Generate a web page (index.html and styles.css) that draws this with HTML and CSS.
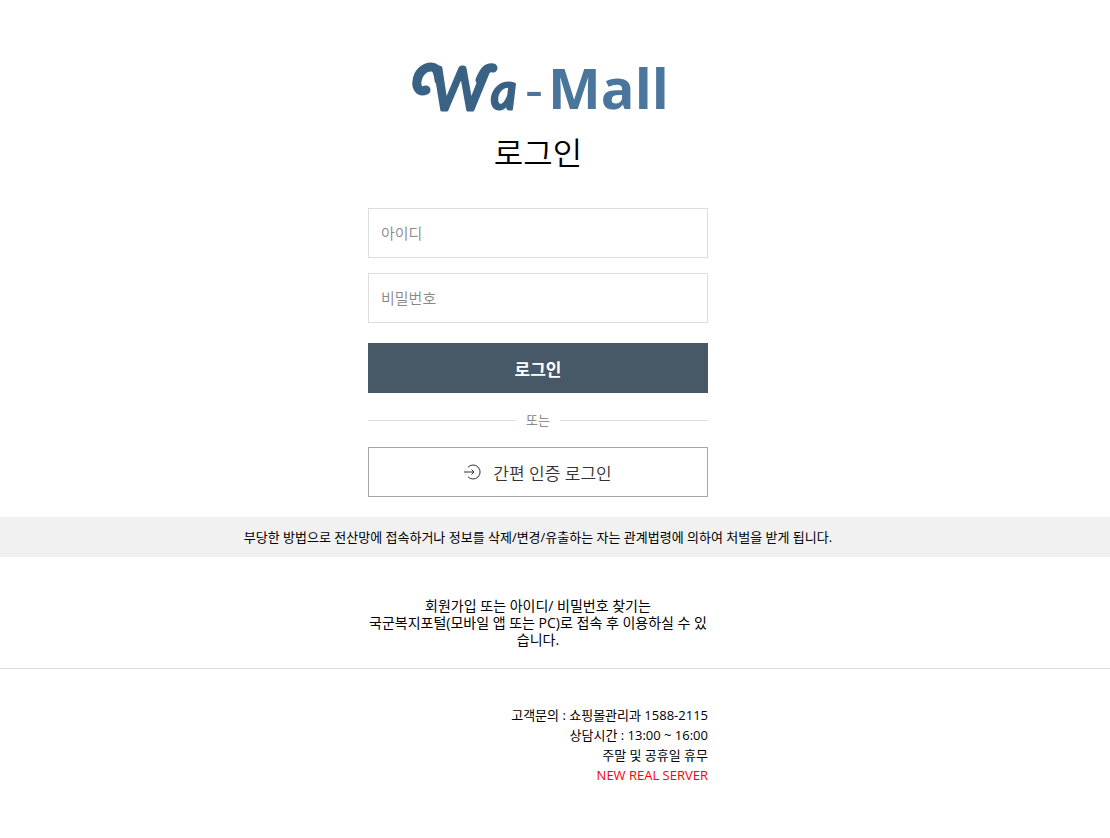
FILE: index.html
```html
<!DOCTYPE html>
<html lang="ko">
  <head>
    <meta charset="utf-8">
    <title>Wa-Mall 로그인</title>
    <meta name="viewport" content="width=device-width, initial-scale=1.0">
    <link rel="stylesheet" href="styles.css">
  </head>
  <body>
    <main class="login">
      <svg class="logo" viewBox="-4 -20 264 90" role="img" aria-label="Wa-Mall">
        <path class="logo-curl" d="M16 30C9 33 6 27 7 21C8 12 15 7 21 7C27 7 28 13 29 20"/>
        <path class="logo-curl" d="M70 20C74 11 77 7 83 8"/>
        <text class="logo-script" x="21" y="50" font-size="60">W</text>
        <text class="logo-script" x="81" y="49" font-size="50">a</text>
        <text class="logo-dash" x="115" y="49">-</text>
        <text class="logo-mall" x="138" y="49">Mall</text>
      </svg>
      <h1>로그인</h1>
      <form class="login-form">
        <input type="text" id="userId" placeholder="아이디" aria-label="아이디">
        <input type="password" id="userPw" placeholder="비밀번호" aria-label="비밀번호">
        <button type="submit" class="login-button">로그인</button>
        <div class="or">또는</div>
        <button type="button" class="simple-button">
          <svg class="enter-icon" viewBox="0 0 18 18" aria-hidden="true">
            <path d="M4 4.2A7 7 0 1 1 4 13.8M0 9H10M7.5 6.5L10 9L7.5 11.5"/>
          </svg>
          간편 인증 로그인
        </button>
      </form>
    </main>

    <p class="notice">부당한 방법으로 전산망에 접속하거나 정보를 삭제/변경/유출하는 자는 관계법령에 의하여 처벌을 받게 됩니다.</p>

    <div class="guide">
      <p>회원가입 또는 아이디/ 비밀번호 찾기는<br>국군복지포털(모바일 앱 또는 PC)로 접속 후 이용하실 수 있<br>습니다.</p>
    </div>

    <footer>
      <div class="contact">
        <p>고객문의 : 쇼핑몰관리과 1588-2115</p>
        <p>상담시간 : 13:00 ~ 16:00</p>
        <p>주말 및 공휴일 휴무</p>
        <p class="server">NEW REAL SERVER</p>
      </div>
    </footer>
  </body>
</html>
```

FILE: styles.css
```css
* {
  box-sizing: border-box;
}
body {
  margin: 0;
  background-color: #fff;
  color: #000;
  font-family: "Open Sans", "Noto Sans CJK KR", sans-serif;
  font-size: 13px;
}
p, h1 {
  margin: 0;
}
.login, .notice, .guide, footer {
  padding-left: 16px;
  padding-right: 50px;
}
.login {
  display: flex;
  flex-direction: column;
  align-items: center;
  padding-top: 40px;
  padding-bottom: 20px;
}
.logo {
  width: 264px;
  height: 90px;
}
.logo-curl {
  fill: none;
  stroke: #3a6285;
  stroke-width: 9;
  stroke-linecap: round;
}
.logo-script {
  fill: #3a6285;
  stroke: #3a6285;
  stroke-width: 3;
  stroke-linejoin: round;
  font-family: Lato, sans-serif;
  font-style: italic;
  font-weight: 400;
}
.logo-mall, .logo-dash {
  fill: #4a769e;
  font-family: "Open Sans", sans-serif;
  font-size: 56px;
  font-weight: 700;
}
.logo-dash {
  font-weight: 400;
}
h1 {
  margin-top: 3px;
  margin-bottom: 35px;
  font-size: 32px;
  font-weight: 350;
  line-height: 40px;
}
.login-form {
  display: flex;
  flex-direction: column;
  width: 100%;
  max-width: 340px;
}
input {
  height: 50px;
  margin-bottom: 15px;
  padding: 0 12px;
  border: 1px solid #ddd;
  border-radius: 0;
  font-family: inherit;
  font-size: 15px;
  font-weight: 350;
}
input::placeholder {
  color: #888;
}
button {
  height: 50px;
  border: none;
  font-family: inherit;
  cursor: pointer;
}
.login-button {
  margin-top: 5px;
  background-color: #475966;
  color: #fff;
  font-size: 17px;
  font-weight: 700;
}
.or {
  display: flex;
  align-items: center;
  gap: 10px;
  margin: 17px 0;
  color: #777;
  font-weight: 350;
  line-height: 20px;
}
.or::before, .or::after {
  content: "";
  flex: 1;
  height: 1px;
  background-color: #ddd;
}
.simple-button {
  display: flex;
  align-items: center;
  justify-content: center;
  gap: 11px;
  border: 1px solid #a6a6a6;
  background-color: #fff;
  color: #333;
  font-size: 17px;
  font-weight: 350;
}
.enter-icon {
  width: 18px;
  height: 18px;
  fill: none;
  stroke: #333;
}
.notice {
  padding-top: 10px;
  padding-bottom: 10px;
  background-color: #f1f1f1;
  line-height: 20px;
  text-align: center;
}
.guide {
  padding-top: 40px;
  padding-bottom: 20px;
  border-bottom: 1px solid #ddd;
  font-size: 14px;
  line-height: 17px;
  text-align: center;
}
footer {
  padding-top: 36px;
  padding-bottom: 50px;
}
.contact {
  max-width: 340px;
  margin: 0 auto;
  line-height: 20px;
  text-align: right;
}
.server {
  color: #f00;
}
```
